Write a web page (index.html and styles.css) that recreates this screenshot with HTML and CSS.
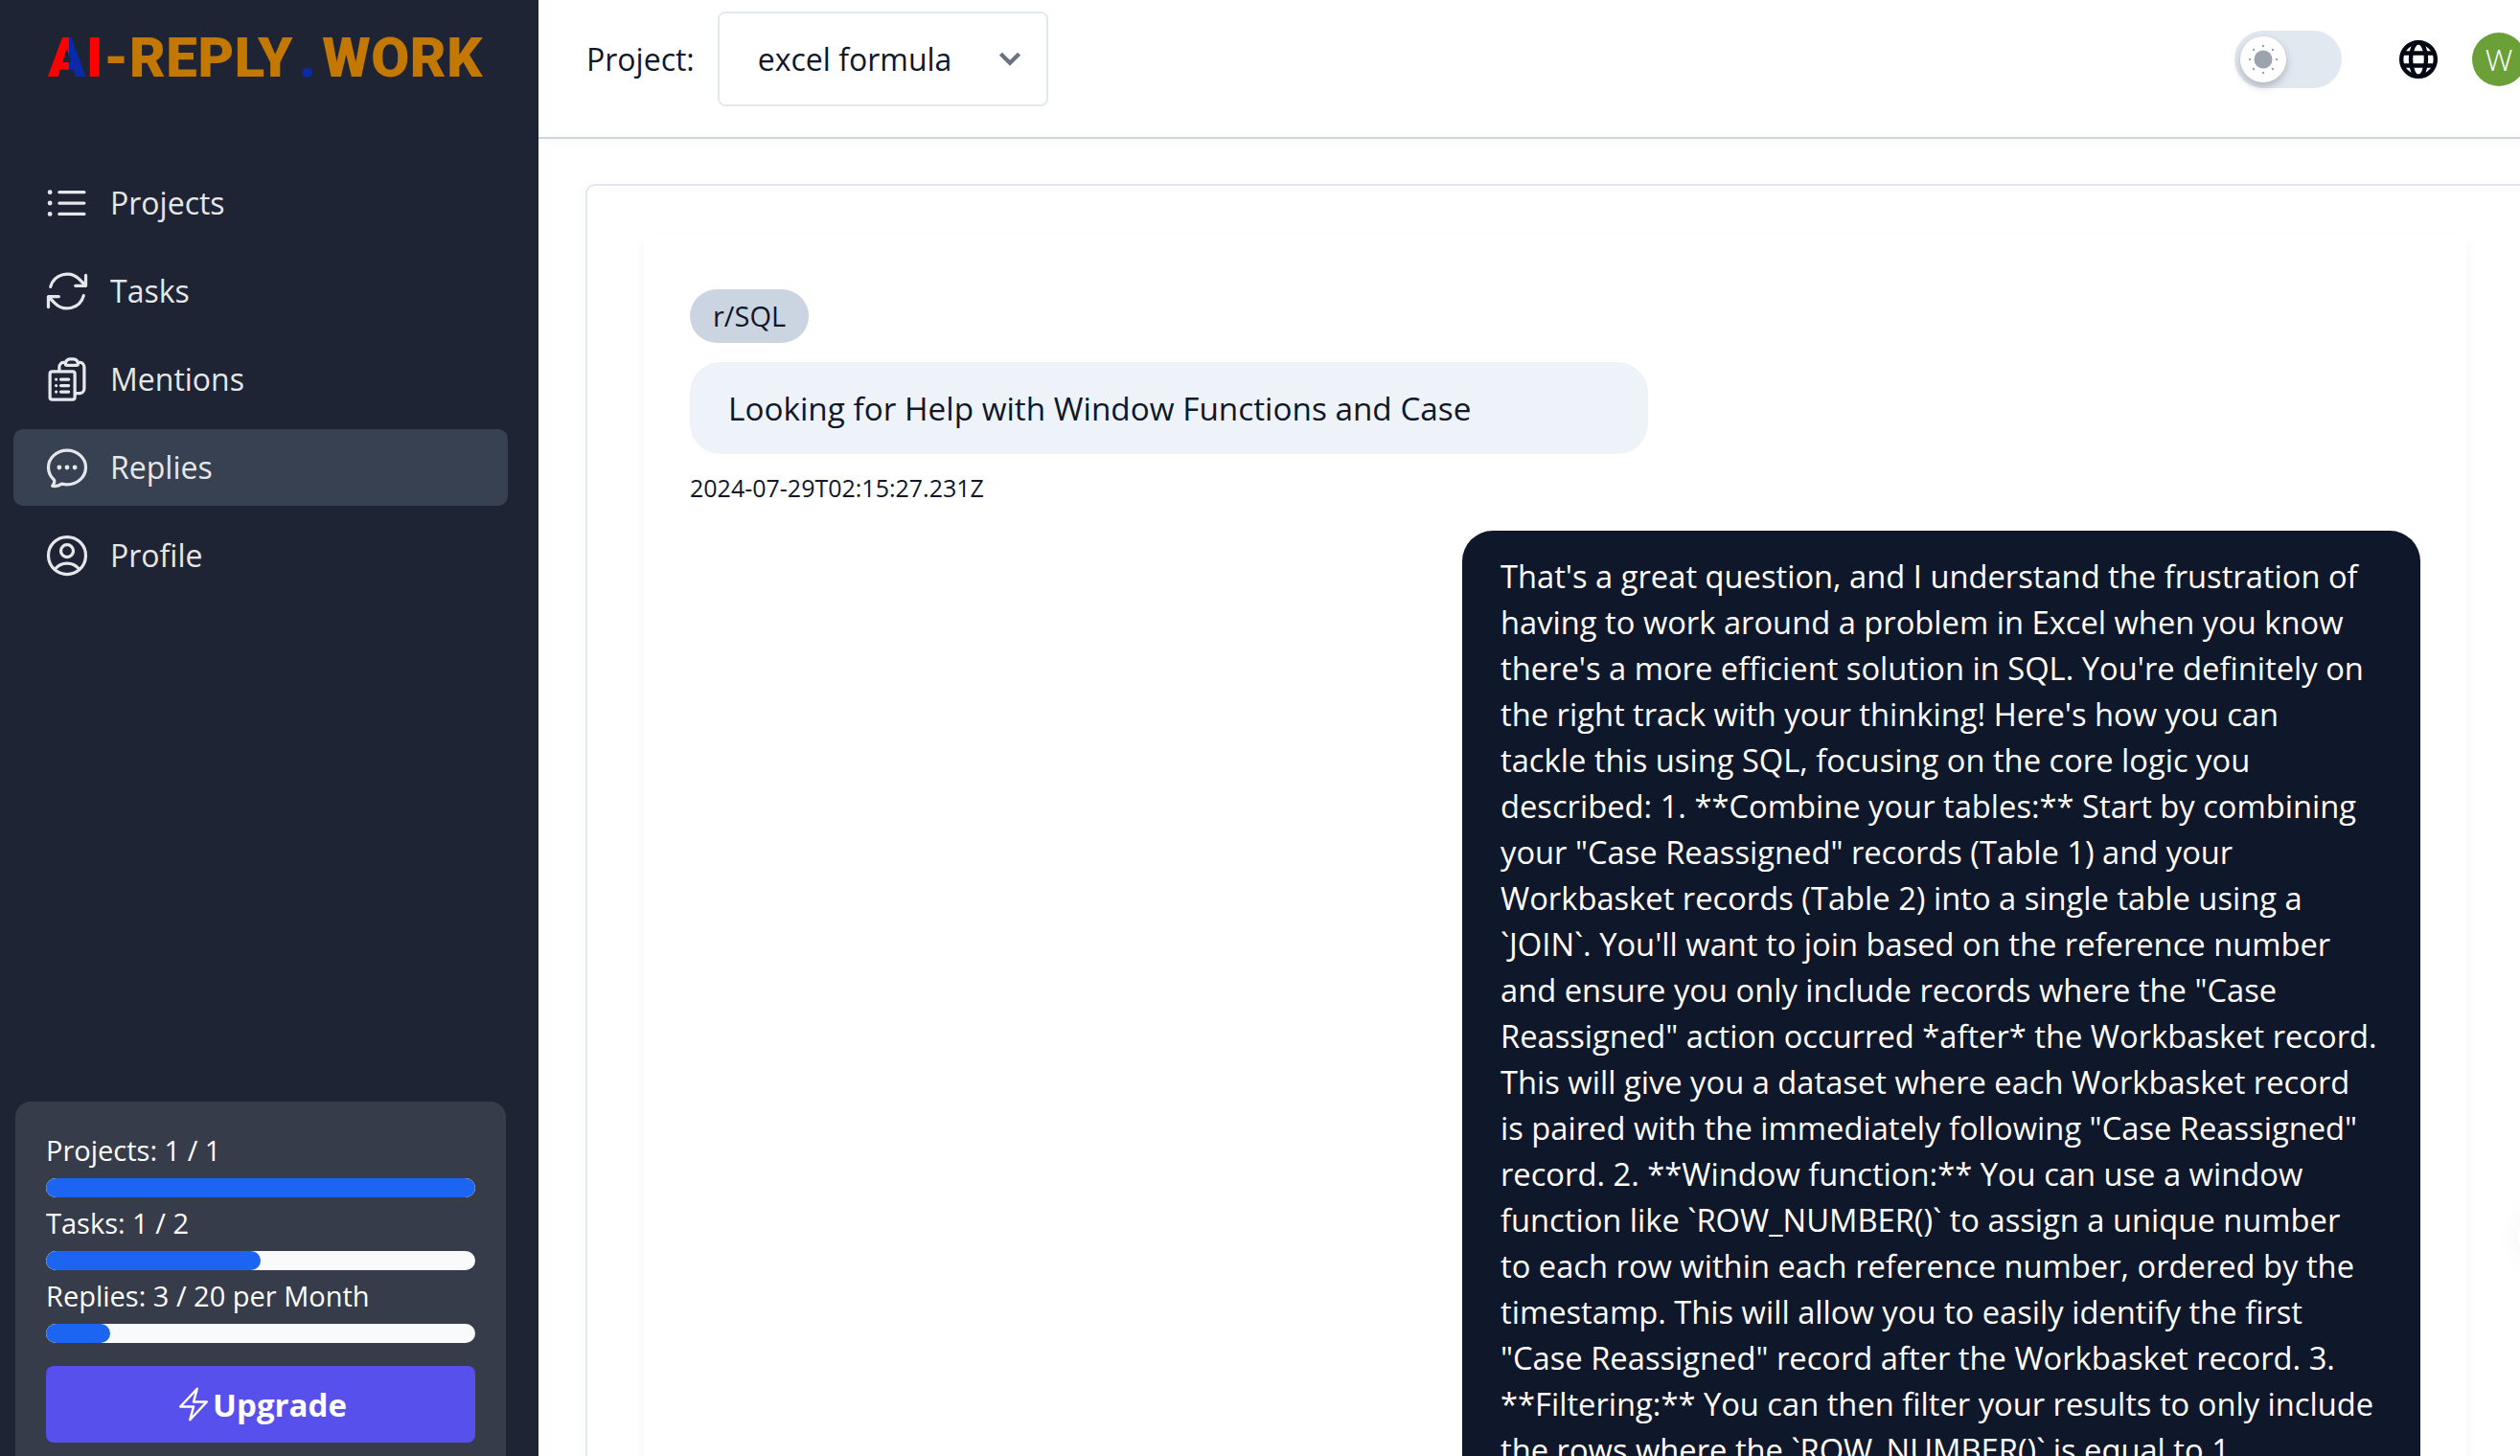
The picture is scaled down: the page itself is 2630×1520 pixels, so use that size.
FILE: index.html
```html
<html>
<head>
  <title>AI-Reply.work</title>
  <meta name="viewport" content="width=device-width, initial-scale=1.0">
  <link rel="stylesheet" href="styles.css">
</head>
<body>
  <div class="app">
    <aside class="sidebar">
      <div class="logo">
        <span class="logo-a">A</span><span class="logo-red">I</span>-REPLY<span class="logo-dot">.</span>WORK
      </div>
      <nav class="nav">
        <a class="nav-item">
          <svg class="nav-icon" viewBox="0 0 24 24"><path d="M8.25 6.75h12M8.25 12h12m-12 5.25h12M3.75 6.75h.007v.008H3.75V6.75Zm.375 0a.375.375 0 1 1-.75 0 .375.375 0 0 1 .75 0ZM3.75 12h.007v.008H3.75V12Zm.375 0a.375.375 0 1 1-.75 0 .375.375 0 0 1 .75 0Zm-.375 5.25h.007v.008H3.75v-.008Zm.375 0a.375.375 0 1 1-.75 0 .375.375 0 0 1 .75 0Z"/></svg>
          Projects
        </a>
        <a class="nav-item">
          <svg class="nav-icon" viewBox="0 0 24 24"><path d="M16.023 9.348h4.992v-.001M2.985 19.644v-4.992m0 0h4.992m-4.993 0 3.181 3.183a8.25 8.25 0 0 0 13.803-3.7M4.031 9.865a8.25 8.25 0 0 1 13.803-3.7l3.181 3.182m0-4.991v4.99"/></svg>
          Tasks
        </a>
        <a class="nav-item">
          <svg class="nav-icon" viewBox="0 0 24 24"><path d="M9 12h3.75M9 15h3.75M9 18h3.75m3 .75H18a2.25 2.25 0 0 0 2.25-2.25V6.108c0-1.135-.845-2.098-1.976-2.192a48.424 48.424 0 0 0-1.123-.08m-5.801 0c-.065.21-.1.433-.1.664 0 .414.336.75.75.75h4.5a.75.75 0 0 0 .75-.75 2.25 2.25 0 0 0-.1-.664m-5.8 0A2.251 2.251 0 0 1 13.5 2.25H15c1.012 0 1.867.668 2.15 1.586m-5.8 0c-.376.023-.75.05-1.124.08C9.095 4.01 8.25 4.973 8.25 6.108V8.25m0 0H4.875c-.621 0-1.125.504-1.125 1.125v11.25c0 .621.504 1.125 1.125 1.125h9.75c.621 0 1.125-.504 1.125-1.125V9.375c0-.621-.504-1.125-1.125-1.125H8.25ZM6.75 12h.008v.008H6.75V12Zm0 3h.008v.008H6.75V15Zm0 3h.008v.008H6.75V18Z"/></svg>
          Mentions
        </a>
        <a class="nav-item active">
          <svg class="nav-icon" viewBox="0 0 24 24"><path d="M8.625 12a.375.375 0 1 1-.75 0 .375.375 0 0 1 .75 0Zm0 0H8.25m4.125 0a.375.375 0 1 1-.75 0 .375.375 0 0 1 .75 0Zm0 0H12m4.125 0a.375.375 0 1 1-.75 0 .375.375 0 0 1 .75 0Zm0 0h-.375M21 12c0 4.556-4.03 8.25-9 8.25a9.764 9.764 0 0 1-2.555-.337A5.972 5.972 0 0 1 5.41 20.97a5.969 5.969 0 0 1-.474-.065 4.48 4.48 0 0 0 .978-2.025c.09-.457-.133-.901-.467-1.226C3.93 16.178 3 14.189 3 12c0-4.556 4.03-8.25 9-8.25s9 3.694 9 8.25Z"/></svg>
          Replies
        </a>
        <a class="nav-item">
          <svg class="nav-icon" viewBox="0 0 24 24"><path d="M17.982 18.725A7.488 7.488 0 0 0 12 15.75a7.488 7.488 0 0 0-5.982 2.975m11.963 0a9 9 0 1 0-11.963 0m11.963 0A8.966 8.966 0 0 1 12 21a8.966 8.966 0 0 1-5.982-2.275M15 9.75a3 3 0 1 1-6 0 3 3 0 0 1 6 0Z"/></svg>
          Profile
        </a>
      </nav>
      <div class="usage">
        <div class="usage-label">Projects: 1 / 1</div>
        <div class="bar"><div class="bar-fill" style="width: 100%"></div></div>
        <div class="usage-label">Tasks: 1 / 2</div>
        <div class="bar"><div class="bar-fill" style="width: 50%"></div></div>
        <div class="usage-label">Replies: 3 / 20 per Month</div>
        <div class="bar"><div class="bar-fill" style="width: 15%"></div></div>
        <button class="upgrade">
          <svg class="upgrade-icon" viewBox="0 0 24 24"><path d="m3.75 13.5 10.5-11.25L12 10.5h8.25L9.75 21.75 12 13.5H3.75Z"/></svg>
          Upgrade
        </button>
      </div>
    </aside>
    <div class="main">
      <header class="topbar">
        <div class="project-picker">
          <span>Project:</span>
          <div class="select">
            excel formula
            <svg class="chevron" viewBox="0 0 24 16"><path d="M3 3l9 9 9-9"/></svg>
          </div>
        </div>
        <div class="top-actions">
          <div class="toggle">
            <div class="knob">
              <svg class="sun" viewBox="0 0 32 32">
                <circle class="sun-core" cx="16" cy="16" r="9.5"/>
                <g class="sun-rays">
                  <circle cx="16" cy="2" r="1.2"/><circle cx="16" cy="30" r="1.2"/>
                  <circle cx="2" cy="16" r="1.2"/><circle cx="30" cy="16" r="1.2"/>
                  <circle cx="6" cy="6" r="1.2"/><circle cx="26" cy="6" r="1.2"/>
                  <circle cx="6" cy="26" r="1.2"/><circle cx="26" cy="26" r="1.2"/>
                </g>
              </svg>
            </div>
          </div>
          <svg class="globe" viewBox="0 0 40 40">
            <circle cx="20" cy="20" r="17.8"/>
            <ellipse cx="20" cy="20" rx="8" ry="17.8"/>
            <path d="M3 13.5h34M3 26.5h34"/>
          </svg>
          <div class="avatar">W</div>
        </div>
      </header>
      <section class="outer-card">
        <div class="inner-card">
          <div class="sub-pill">r/SQL</div>
          <div class="post-bubble">Looking for Help with Window Functions and Case</div>
          <div class="stamp">2024-07-29T02:15:27.231Z</div>
          <div class="reply-row">
            <div class="reply-bubble">That's a great question, and I understand the frustration of<br>
having to work around a problem in Excel when you know<br>
there's a more efficient solution in SQL. You're definitely on<br>
the right track with your thinking! Here's how you can<br>
tackle this using SQL, focusing on the core logic you<br>
described: 1. **Combine your tables:** Start by combining<br>
your "Case Reassigned" records (Table 1) and your<br>
Workbasket records (Table 2) into a single table using a<br>
`JOIN`. You'll want to join based on the reference number<br>
and ensure you only include records where the "Case<br>
Reassigned" action occurred *after* the Workbasket record.<br>
This will give you a dataset where each Workbasket record<br>
is paired with the immediately following "Case Reassigned"<br>
record. 2. **Window function:** You can use a window<br>
function like `ROW_NUMBER()` to assign a unique number<br>
to each row within each reference number, ordered by the<br>
timestamp. This will allow you to easily identify the first<br>
"Case Reassigned" record after the Workbasket record. 3.<br>
**Filtering:** You can then filter your results to only include<br>
the rows where the `ROW_NUMBER()` is equal to 1.</div>
          </div>
        </div>
      </section>
    </div>
  </div>
  <div class="float-button"></div>
</body>
</html>
```

FILE: styles.css
```css
html, body {
  margin: 0;
  height: 100%;
  overflow: hidden;
}
body {
  font-family: "Open Sans", "Noto Sans", sans-serif;
  font-size: 33px;
  color: #0f172a;
  background: white;
}
.app {
  display: flex;
  height: 1520px;
}
.sidebar {
  width: 562px;
  flex-shrink: 0;
  background: #1e2433;
  display: flex;
  flex-direction: column;
  overflow: hidden;
}
.logo {
  height: 92px;
  padding: 14px 0 0 50px;
  font-family: Roboto, sans-serif;
  font-weight: 900;
  font-size: 58px;
  line-height: 92px;
  letter-spacing: 0.6px;
  color: #c27803;
  white-space: nowrap;
}
.logo-a {
  background: linear-gradient(to right, #ff0000 55%, #0a2aa8 55%);
  -webkit-background-clip: text;
  background-clip: text;
  color: transparent;
}
.logo-red {
  color: #ff0000;
}
.logo-dot {
  color: #0a2aa8;
  margin: 0 6px;
}
.nav {
  display: flex;
  flex-direction: column;
  gap: 12px;
  padding: 66px 32px 0 14px;
}
.nav-item {
  display: flex;
  align-items: center;
  gap: 19px;
  height: 80px;
  padding-left: 30px;
  border-radius: 10px;
  color: #e5e7eb;
  font-size: 32px;
  line-height: 78px;
}
.nav-item.active {
  background: #374151;
}
.nav-icon {
  width: 52px;
  height: 52px;
  fill: none;
  stroke: #e5e7eb;
  stroke-width: 1.5;
  stroke-linecap: round;
  stroke-linejoin: round;
}
.usage {
  margin: auto 34px 0 16px;
  padding: 24px 32px 14px;
  background: #373c4b;
  border-radius: 16px 16px 0 0;
  color: white;
  font-size: 29px;
}
.usage-label {
  height: 56px;
  line-height: 54px;
}
.bar {
  height: 20px;
  background: #f9fafb;
  border-radius: 10px;
  overflow: hidden;
}
.bar-fill {
  height: 100%;
  background: #1c64f2;
  border-radius: 10px;
}
.upgrade {
  display: flex;
  align-items: center;
  justify-content: center;
  width: 100%;
  height: 80px;
  margin-top: 24px;
  background: #5850ec;
  border: 0;
  border-radius: 8px;
  color: white;
  font-family: inherit;
  font-size: 33px;
  font-weight: 700;
}
.upgrade-icon {
  width: 40px;
  height: 40px;
  fill: none;
  stroke: white;
  stroke-width: 1.5;
  stroke-linejoin: round;
}
.main {
  flex: 1;
  min-width: 0;
  overflow: hidden;
}
.topbar {
  display: flex;
  align-items: center;
  justify-content: space-between;
  height: 143px;
  padding: 0 0 0 50px;
  background: white;
  border-bottom: 2px solid #cbd5e1;
  box-shadow: 0 4px 10px rgba(15, 23, 42, 0.03);
}
.project-picker {
  display: flex;
  align-items: center;
  gap: 24px;
  height: 124px;
  margin-top: -20px;
  font-size: 32px;
}
.select {
  display: flex;
  align-items: center;
  width: 345px;
  height: 99px;
  box-sizing: border-box;
  padding-left: 40px;
  border: 2px solid #e2e8f0;
  border-radius: 8px;
  position: relative;
}
.chevron {
  position: absolute;
  right: 25px;
  top: 39px;
  width: 26px;
  height: 17px;
  fill: none;
  stroke: #6b7280;
  stroke-width: 4;
}
.top-actions {
  display: flex;
  align-items: center;
  margin-right: -6px;
  margin-top: -20px;
}
.toggle {
  width: 112px;
  height: 60px;
  padding: 6px;
  box-sizing: border-box;
  background: #e2e8f0;
  border-radius: 30px;
  margin-right: 60px;
}
.knob {
  display: flex;
  align-items: center;
  justify-content: center;
  width: 48px;
  height: 48px;
  background: white;
  border-radius: 50%;
  box-shadow: 0 4px 8px rgba(15, 23, 42, 0.25);
}
.sun {
  width: 32px;
  height: 32px;
}
.sun-core {
  fill: #9ca3af;
}
.sun-rays {
  fill: #9ca3af;
}
.globe {
  width: 40px;
  height: 40px;
  margin-right: 36px;
  fill: none;
  stroke: #030712;
  stroke-width: 4.4;
}
.avatar {
  display: flex;
  align-items: center;
  justify-content: center;
  width: 56px;
  height: 56px;
  background: #6b9f38;
  border-radius: 50%;
  color: white;
  font-size: 32px;
  font-weight: 300;
}
.outer-card {
  width: 2200px;
  height: 1400px;
  margin: 47px 0 0 49px;
  border: 2px solid #e2e8f0;
  border-radius: 10px;
  box-sizing: border-box;
  box-shadow: -6px 0 14px rgba(15, 23, 42, 0.02);
}
.inner-card {
  width: 1902px;
  height: 1400px;
  margin: 52px 0 0 59px;
  padding: 56px 48px 0;
  box-sizing: border-box;
  box-shadow: 0 6px 12px rgba(15, 23, 42, 0.05);
}
.sub-pill {
  width: fit-content;
  height: 56px;
  line-height: 56px;
  padding: 0 24px;
  background: #cbd5e1;
  border-radius: 28px;
  font-size: 29px;
}
.post-bubble {
  width: 1000px;
  box-sizing: border-box;
  margin-top: 20px;
  padding: 24px 40px;
  background: #eef2f9;
  border-radius: 32px;
  font-size: 33.3px;
  line-height: 48px;
}
.stamp {
  margin-top: 20px;
  font-size: 25px;
  line-height: 30px;
  padding-bottom: 2px;
}
.reply-row {
  display: flex;
  justify-content: flex-end;
  margin-top: 28px;
}
.reply-bubble {
  width: 1000px;
  box-sizing: border-box;
  padding: 24px 40px;
  background: #0f182a;
  border-radius: 32px;
  color: white;
  font-size: 32.7px;
  line-height: 48px;
  white-space: nowrap;
}
.float-button {
  position: fixed;
  left: 2628px;
  top: 1262px;
  width: 60px;
  height: 60px;
  background: white;
  border-radius: 50%;
  box-shadow: 0 0 30px rgba(15, 23, 42, 0.05);
}
```
